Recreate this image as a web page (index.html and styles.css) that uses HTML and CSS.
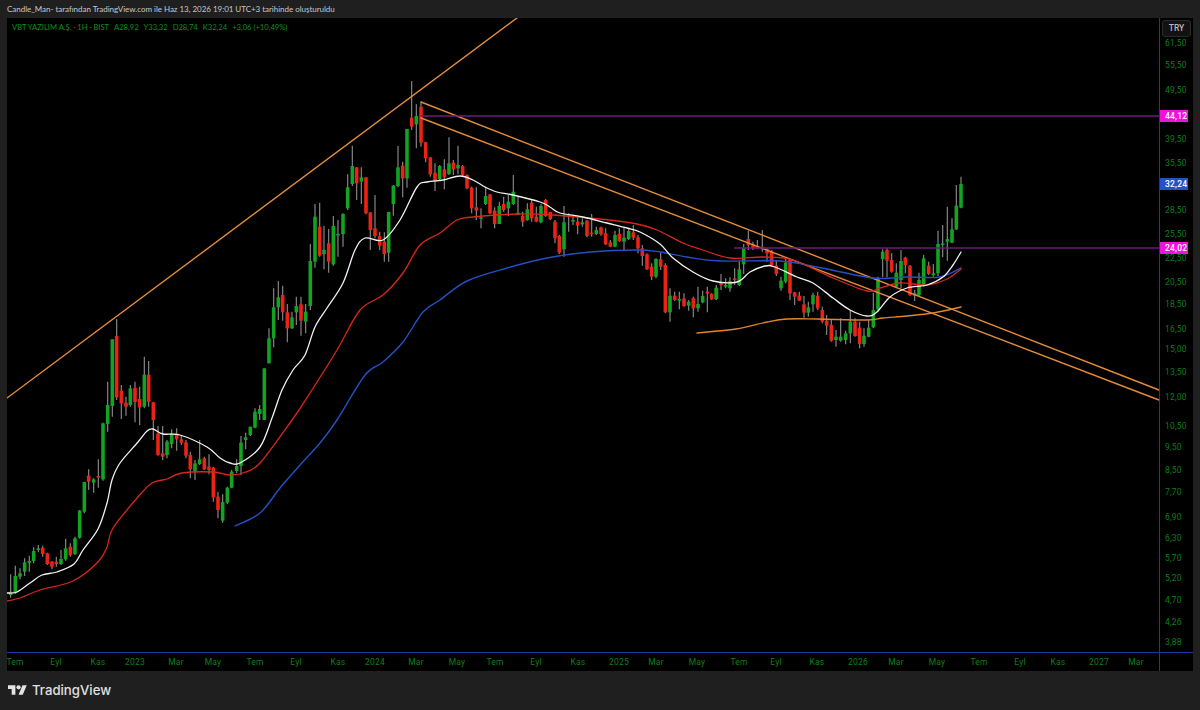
FILE: index.html
```html
<!DOCTYPE html>
<html lang="tr">
<head>
    <meta charset="UTF-8">
    <title>VBT YAZILIM - TradingView</title>
    <link rel="stylesheet" href="styles.css">
</head>
<body>
    <p class="byline">Candle_Man- tarafından TradingView.com ile Haz 13, 2026 19:01 UTC+3 tarihinde oluşturuldu</p>

    <div class="chart">
        <svg id="plot" class="plot" viewBox="7 18 1186 653" width="1186" height="653"></svg>
        <div class="legend">
            <span>VBT YAZILIM A.Ş. · 1H · BIST</span>
            <span>A28,92</span>
            <span>Y33,32</span>
            <span>D28,74</span>
            <span>K32,24</span>
            <span>+3,06 (+10,49%)</span>
        </div>
        <div class="currency">TRY</div>
    </div>

    <div class="brand">
        <svg class="brand-icon" viewBox="0 4 36 18" width="19" height="10">
            <path d="M14 22H7V11H0V4h14v18zM28 22h-8l7.5-18h8L28 22z"></path>
            <circle cx="20" cy="8" r="4"></circle>
        </svg>
        <span class="brand-name">TradingView</span>
    </div>

    <script src="chart.js"></script>
</body>
</html>
```

FILE: styles.css
```css
* {
    margin: 0;
    padding: 0;
    box-sizing: border-box;
}

body {
    width: 1200px;
    height: 710px;
    overflow: hidden;
    padding: 0 7px;
    background: #1f1f1f;
    font-family: 'Roboto', 'Liberation Sans', sans-serif;
}

.byline {
    height: 18px;
    line-height: 19px;
    font-family: 'Lato', 'Roboto', sans-serif;
    font-size: 8px;
    letter-spacing: -0.03px;
    color: #c8c8c8;
    white-space: nowrap;
}

.chart {
    position: relative;
    width: 1186px;
    height: 653px;
    background: #000;
}

.plot {
    display: block;
}

.legend {
    position: absolute;
    top: 3px;
    left: 5px;
    display: flex;
    gap: 5px;
    font-family: 'Lato', 'Roboto', sans-serif;
    font-size: 7.6px;
    line-height: 12px;
    color: #0f901e;
    white-space: nowrap;
}

.currency {
    position: absolute;
    top: 2px;
    left: 1155px;
    width: 29px;
    height: 17px;
    border: 1px solid #2b2b2b;
    border-radius: 3px;
    background: #121212;
    font-size: 8.5px;
    font-weight: 500;
    line-height: 15px;
    text-align: center;
    color: #b8b8b8;
}

.brand {
    display: flex;
    align-items: center;
    gap: 5px;
    padding: 10px 0 0 1px;
}

.brand-icon {
    fill: #e4e4e4;
}

.brand-name {
    font-family: 'Inter', 'Roboto', sans-serif;
    font-size: 13.2px;
    font-weight: 500;
    line-height: 18px;
    color: #e0e0e0;
}

/* chart pieces */
.wick {
    stroke: #858585;
    stroke-width: 1.2;
}

.up {
    fill: #12a322;
}

.down {
    fill: #ea2315;
}

.line {
    fill: none;
    stroke-linecap: round;
    stroke-linejoin: round;
}

.ma-white {
    stroke: #f2f2f2;
    stroke-width: 1.3;
}

.ma-red {
    stroke: #d8261c;
    stroke-width: 1.3;
}

.ma-blue {
    stroke: #2350c4;
    stroke-width: 1.4;
}

.ma-orange {
    stroke: #e0852c;
    stroke-width: 1.4;
}

.trend {
    stroke: #e28c3a;
    stroke-width: 1.4;
}

.level {
    stroke: #6c1c78;
    stroke-width: 1.5;
}

.axis-line {
    stroke: #1a3a94;
    stroke-width: 1;
}

.tick {
    font-size: 8.5px;
    letter-spacing: 0.2px;
    fill: #0f7f1a;
    dominant-baseline: central;
}

.tag-pink {
    fill: #f012dc;
}

.tag-blue {
    fill: #2152c8;
}

.tag-text {
    font-size: 8.5px;
    font-weight: 500;
    letter-spacing: 0.2px;
    fill: #fff;
    dominant-baseline: central;
}
```

FILE: chart.js
```js
// candles read off the picture in blocks: each block has its own origin and a 3x scale.
// row = x color high top bottom low
const blocks = [
    { x0: 0, y0: 300, rows: `
        32 g 823 875 885 893
        46 g 797 828 880 882
        60 g 805 820 830 838
        74 g 775 787 815 828
        88 g 767 783 788 815
        101 g 742 753 783 790
        115 g 735 745 750 757
        128 r 737 743 762 770
        142 r 758 760 792 795
        156 r 783 785 800 808
        169 r 770 785 792 800
        183 g 750 777 792 795
        197 g 716 745 778 782
        211 r 730 740 765 770
        225 g 710 715 762 765
        239 g 630 632 713 716
        253 g 545 546 635 640
        266 r 508 527 545 570
        281 g 535 538 548 578
        295 r 478 528 533 563
        309 g 368 370 538 542
        323 g 245 315 372 395
        337 g 118 118 318 350
        350 r 57 108 292 300
        364 r 255 272 310 357
        378 r 290 308 320 347
        391 g 255 265 315 320
        405 r 245 264 306 367
        419 r 260 297 322 375
        433 g 170 224 320 325
        446 r 183 224 305 320
        460 r 305 307 360 420
        474 r 378 400 465 467
        488 r 378 460 470 480
        501 g 420 425 465 475
        515 g 388 400 432 445
        530 r 385 400 418 452
        544 r 405 418 428 435
        558 r 420 427 467 475
        571 r 455 465 508 535
        585 g 480 490 515 540
        599 g 420 478 492 495
        613 r 470 475 508 510
        627 r 463 500 510 523
        640 r 500 503 592 605
        654 r 575 590 630 655
        668 g 583 606 662 668
        682 g 560 563 608 612
        695 g 510 515 563 565
        710 g 478 498 513 520
        723 g 408 428 498 525
        737 g 398 412 420 448
        751 g 380 380 405 408
        765 g 335 345 383 385` },
    { x0: 240, y0: 80, rows: `
        45 g 985 995 1020 1020
        59 g 975 987 1002 1020
        73 g 865 865 1020 1020
        87 g 745 775 850 850
        101 g 625 682 775 802
        115 g 603 652 682 720
        128 r 617 645 697 722
        142 r 672 697 745 787
        156 g 695 712 745 747
        169 g 650 678 697 735
        183 r 650 673 722 767
        197 g 672 695 725 760
        211 g 492 543 678 690
        225 g 372 410 545 563
        239 r 368 440 527 530
        252 g 438 510 522 568
        266 r 447 490 545 578
        280 g 408 438 553 557
        294 g 420 462 465 530
        309 g 400 402 462 500
        323 g 283 322 385 390
        337 g 197 258 312 318
        350 r 262 262 310 360
        364 g 262 292 305 372
        378 r 292 292 400 403
        391 r 397 397 450 510
        405 r 345 445 468 475
        419 r 455 468 497 510
        433 r 457 485 522 545
        446 g 395 396 518 545
        460 g 315 317 372 407
        474 g 198 262 318 322
        488 r 245 257 295 352
        501 g 147 147 295 323
        515 r 3 113 140 150
        529 g 73 108 133 205
        543 r 65 80 188 200
        557 r 185 187 235 247
        571 r 232 232 283 290
        585 r 250 278 305 333
        599 g 255 258 297 300
        613 r 238 268 292 328
        627 g 172 250 282 285
        640 r 240 248 268 285
        654 g 197 255 265 283
        668 r 255 258 285 288
        681 r 283 285 325 328
        695 r 320 323 385 400
        709 r 322 382 392 420
        723 g 385 412 415 445` },
    { x0: 440, y0: 100, rows: `
        137 g 260 288 312 315
        150 r 283 283 340 342
        164 r 322 332 372 385
        178 g 305 318 372 372
        191 r 290 312 330 335
        205 g 285 305 325 348
        220 g 225 275 312 315
        234 g 290 338 344 345
        248 r 335 348 365 380
        262 g 310 328 360 362
        275 r 300 308 355 365
        289 r 320 350 365 367
        303 g 312 318 367 370
        317 r 297 300 348 350
        331 r 335 336 358 360
        345 r 360 365 415 430
        358 r 405 408 458 462
        372 g 318 367 448 470
        386 g 340 345 350 395
        399 g 345 360 365 375
        413 r 350 365 377 403
        427 g 355 367 373 380
        441 r 360 362 408 412
        455 r 342 398 402 410
        469 g 380 390 402 405
        483 r 380 382 403 407
        497 r 385 400 433 435
        511 r 420 427 440 442
        525 g 392 405 440 442
        538 r 385 402 423 425
        552 g 382 413 425 450
        566 g 385 393 417 420
        580 r 375 397 413 420
        594 r 405 412 445 460
        607 r 435 445 468 497
        621 r 460 463 508 510
        635 r 490 500 530 540
        648 g 475 477 530 535
        662 r 458 478 500 510
        676 r 490 495 637 640
        690 g 565 587 637 665
        704 r 575 587 600 603
        718 g 575 597 602 628
        732 r 580 595 618 620
        746 g 600 605 617 632
        760 r 590 595 625 652
        774 g 560 612 625 635
        788 g 572 588 607 610
        802 r 560 575 580 637
        815 r 580 582 598 600
        829 g 555 565 597 600` },
    { x0: 700, y0: 170, rows: `
        49 g 350 353 387 390
        63 r 312 340 345 360
        77 g 325 345 350 355
        90 g 322 333 355 365
        104 r 295 325 330 345
        118 g 275 298 345 348
        131 g 222 235 283 312
        145 r 182 207 225 240
        159 r 215 222 235 240
        172 r 210 230 233 237
        187 r 180 230 238 245
        201 r 235 237 250 275
        215 r 240 245 285 285
        229 r 270 287 312 318
        243 g 320 332 355 362
        257 g 265 278 335 340
        270 r 268 270 370 390
        284 r 365 367 380 405
        298 r 365 377 392 393
        312 r 378 403 428 443
        325 g 395 412 428 440
        339 g 368 375 403 425
        353 r 365 377 415 420
        367 r 410 420 455 460
        380 r 435 452 467 495
        394 r 448 465 512 515
        408 g 480 500 510 530
        422 g 445 500 512 515
        437 g 482 490 510 523
        451 g 420 455 490 520
        465 r 445 455 498 500
        479 r 455 473 522 535
        492 g 475 497 522 530
        506 g 450 473 500 502
        520 g 368 420 472 475
        534 g 320 325 418 425
        548 g 238 245 267 322
        561 r 235 240 272 322
        575 r 250 270 305 308
        589 g 280 308 350 355
        603 g 240 273 330 355
        616 r 260 263 285 310
        630 r 285 287 375 378
        644 g 360 370 377 393
        657 g 308 330 375 378
        671 g 255 265 345 350
        686 r 275 287 312 315
        700 g 282 310 315 320
        714 g 182 222 310 318
        728 g 165 220 225 262
        742 g 110 207 215 272
        756 g 145 178 218 220
        769 g 45 107 178 180
        783 g 20 42 113 115` }
];

const movingAverages = {
    'ma-orange': [[697, 333], [736, 329], [767, 322], [787, 319], [817, 319], [867, 320], [883, 318], [907, 316], [933, 313], [961, 307]],
    'ma-blue': [[235, 526], [260, 513], [280, 488], [300, 465], [320, 443], [337, 420], [365, 375], [383, 362], [403, 342], [423, 312], [440, 300], [467, 281], [507, 268], [547, 258], [590, 252], [637, 250], [660, 252], [687, 257], [720, 261], [780, 261], [817, 267], [873, 278], [907, 277], [940, 277], [961, 268]],
    'ma-red': [[7, 601], [20, 598], [40, 590], [73, 581], [98, 562], [107, 547], [113, 528], [138, 497], [152, 483], [167, 479], [182, 473], [213, 472], [230, 475], [243, 473], [260, 463], [292, 420], [310, 393], [337, 350], [360, 310], [383, 295], [403, 273], [420, 245], [440, 233], [457, 220], [473, 217], [517, 214], [553, 215], [600, 219], [637, 224], [657, 230], [683, 243], [700, 249], [730, 258], [763, 257], [793, 260], [833, 278], [867, 291], [880, 288], [900, 283], [927, 285], [947, 279], [961, 269]],
    'ma-white': [[7, 593], [17, 592], [30, 583], [42, 575], [57, 572], [74, 564], [83, 550], [98, 529], [107, 503], [112, 480], [120, 463], [138, 442], [147, 431], [153, 429], [163, 434], [180, 435], [207, 447], [220, 458], [230, 463], [240, 463], [260, 447], [272, 418], [282, 390], [293, 370], [305, 355], [315, 327], [327, 308], [343, 283], [355, 250], [365, 238], [383, 240], [400, 220], [417, 187], [427, 182], [443, 180], [460, 176], [473, 180], [485, 187], [497, 192], [513, 195], [540, 202], [550, 207], [560, 213], [583, 217], [607, 223], [627, 228], [640, 232], [660, 244], [673, 258], [693, 272], [713, 281], [737, 282], [750, 272], [765, 266], [775, 267], [797, 277], [813, 283], [833, 298], [850, 310], [867, 316], [877, 312], [890, 297], [907, 288], [927, 285], [943, 277], [953, 265], [961, 252]]
};

const priceTicks = [
    ['61,50', 43], ['55,50', 65], ['49,50', 90], ['39,50', 139], ['35,50', 163],
    ['28,50', 210], ['25,50', 234], ['22,50', 258], ['20,50', 282], ['18,50', 304], ['16,50', 329],
    ['15,00', 349], ['13,50', 372], ['12,00', 397], ['10,50', 426], ['9,50', 447], ['8,50', 470],
    ['7,70', 492], ['6,90', 517], ['6,30', 538], ['5,70', 558], ['5,20', 578], ['4,70', 600],
    ['4,26', 622], ['3,88', 642]
];

const timeTicks = [
    ['Tem', 15], ['Eyl', 56], ['Kas', 98], ['2023', 135], ['Mar', 176], ['May', 213], ['Tem', 255],
    ['Eyl', 296], ['Kas', 338], ['2024', 375], ['Mar', 416], ['May', 457], ['Tem', 495], ['Eyl', 536],
    ['Kas', 578], ['2025', 619], ['Mar', 656], ['May', 697], ['Tem', 739], ['Eyl', 776], ['Kas', 817],
    ['2026', 858], ['Mar', 896], ['May', 937], ['Tem', 979], ['Eyl', 1020], ['Kas', 1058], ['2027', 1099],
    ['Mar', 1136]
];

const plot = document.getElementById('plot');

function add(tag, attrs, text) {
    const el = document.createElementNS('http://www.w3.org/2000/svg', tag);
    for (const key in attrs) el.setAttribute(key, attrs[key]);
    if (text) el.textContent = text;
    plot.appendChild(el);
    return el;
}

function drawCandles() {
    blocks.forEach(function(block) {
        block.rows.trim().split('\n').forEach(function(row) {
            const parts = row.trim().split(' ');
            const x = block.x0 + Number(parts[0]) / 3;
            const [high, top, bottom, low] = parts.slice(2).map(n => block.y0 + Number(n) / 3);
            add('line', { class: 'wick', x1: x, x2: x, y1: high, y2: low });
            add('rect', {
                class: parts[1] === 'g' ? 'up' : 'down',
                x: x - 1.8,
                y: top,
                width: 3.6,
                height: Math.max(bottom - top, 1.5)
            });
        });
    });
}

// smooth line through the points (catmull-rom)
function smoothPath(pts) {
    let d = 'M' + pts[0].join(' ');
    for (let i = 0; i < pts.length - 1; i++) {
        const p0 = pts[i - 1] || pts[i];
        const p1 = pts[i];
        const p2 = pts[i + 1];
        const p3 = pts[i + 2] || p2;
        d += ' C' + (p1[0] + (p2[0] - p0[0]) / 6) + ' ' + (p1[1] + (p2[1] - p0[1]) / 6) +
            ' ' + (p2[0] - (p3[0] - p1[0]) / 6) + ' ' + (p2[1] - (p3[1] - p1[1]) / 6) +
            ' ' + p2[0] + ' ' + p2[1];
    }
    return d;
}

function drawLines() {
    add('line', { class: 'line trend', x1: 7, y1: 398, x2: 517, y2: 18 });
    add('line', { class: 'line trend', x1: 421, y1: 102, x2: 1159, y2: 390 });
    add('line', { class: 'line trend', x1: 421, y1: 118, x2: 1159, y2: 400 });
    add('line', { class: 'level', x1: 421, y1: 116, x2: 1159, y2: 116 });
    add('line', { class: 'level', x1: 734, y1: 248, x2: 1159, y2: 248 });

    for (const name in movingAverages) {
        add('path', { class: 'line ' + name, d: smoothPath(movingAverages[name]) });
    }
}

function drawAxes() {
    add('line', { class: 'axis-line', x1: 1159.5, y1: 18, x2: 1159.5, y2: 671 });
    add('line', { class: 'axis-line', x1: 7, y1: 652.5, x2: 1193, y2: 652.5 });

    priceTicks.forEach(function(tick) {
        add('text', { class: 'tick', x: 1165, y: tick[1] }, tick[0]);
    });
    timeTicks.forEach(function(tick) {
        add('text', { class: 'tick', x: tick[1], y: 661.5, 'text-anchor': 'middle' }, tick[0]);
    });

    drawTag('44,12', 116, 'tag-pink');
    drawTag('32,24', 184, 'tag-blue');
    drawTag('24,02', 248, 'tag-pink');
}

function drawTag(label, y, style) {
    add('rect', { class: style, x: 1160, y: y - 6, width: 28, height: 12 });
    add('text', { class: 'tag-text', x: 1165, y: y }, label);
}

drawCandles();
drawLines();
drawAxes();
```
